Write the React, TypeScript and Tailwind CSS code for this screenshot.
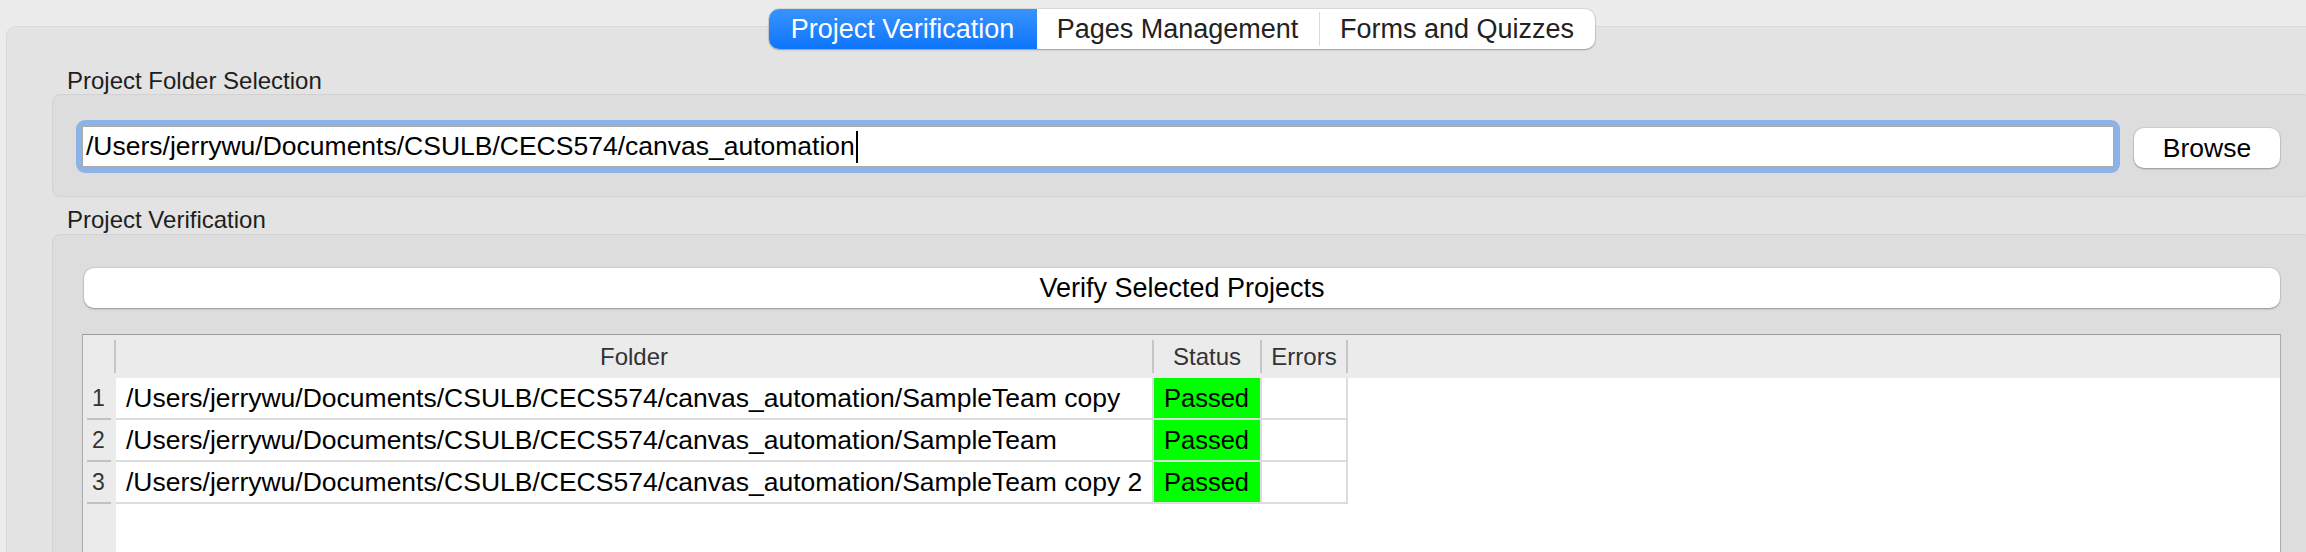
import { useState } from "react"

const rows = [
  "/Users/jerrywu/Documents/CSULB/CECS574/canvas_automation/SampleTeam copy",
  "/Users/jerrywu/Documents/CSULB/CECS574/canvas_automation/SampleTeam",
  "/Users/jerrywu/Documents/CSULB/CECS574/canvas_automation/SampleTeam copy 2",
]

const tabs = [
  { label: "Project Verification", width: "w-[268px]" },
  { label: "Pages Management", width: "w-[282px]" },
  { label: "Forms and Quizzes", width: "w-[275px]" },
]

function HeaderCell({ label, width }: { label: string; width: string }) {
  return (
    <div className={`flex h-full items-center ${width}`}>
      <span className="flex-1 text-center text-[24px] leading-[43px] text-[#333]">{label}</span>
      <div className="h-[33px] w-[2px] bg-[#c6c6c6]" />
    </div>
  )
}

export default function App() {
  const [active, setActive] = useState(0)
  const folder = "/Users/jerrywu/Documents/CSULB/CECS574/canvas_automation"

  return (
    <div className="h-[552px] w-[2306px] overflow-hidden bg-[#ececec] font-['Liberation_Sans',Arial,sans-serif] text-black">
      <div className="w-[2363px] px-[6px] pt-[26px]">
        <div className="h-[600px] rounded-[10px] border border-[#d8d8d8] bg-[#e3e3e3] px-[45px]">
          {/* segmented tabs sit over the panel's top edge */}
          <div className="-mt-[18px] flex justify-center">
            <div className="flex h-[40px] overflow-hidden rounded-[10px] bg-white shadow-[0_0_0_1px_rgba(0,0,0,0.07),0_1px_2px_rgba(0,0,0,0.25)]">
              {tabs.map((t, i) => (
                <div key={t.label} className="flex items-center">
                  {i === 2 && <div className="h-[34px] w-px bg-[#dadada]" />}
                  <button
                    onClick={() => setActive(i)}
                    className={`${t.width} h-[40px] text-center text-[27px] leading-[40px] ${
                      active === i ? "bg-linear-to-b from-[#3793fd] to-[#0a74fb] text-white" : "text-[#222]"
                    }`}
                  >
                    {t.label}
                  </button>
                </div>
              ))}
            </div>
          </div>

          <div className="ml-[15px] mt-[20px] mb-[1px] text-[24px] leading-[24px] text-[#1e1e1e]">Project Folder Selection</div>
          <div className="flex h-[103px] items-start rounded-[8px] border border-[#d2d2d2] bg-[#dddddd] pl-[23px] pr-[30px] pt-[25px]">
            <div className="flex-1 rounded-[9px] bg-[#8cb2e8] p-[6px]">
              <div className="flex h-[41px] items-center border border-[#a9a9a9] bg-white pl-[3px]">
                <span className="whitespace-pre text-[26.5px] leading-[39px]">{folder}</span>
                <span className="ml-[1px] h-[32px] w-[2px] bg-black" />
              </div>
            </div>
            <button className="ml-[14px] mt-[8px] h-[40px] w-[146px] rounded-[10px] bg-white text-[26.5px] leading-[40px] shadow-[0_0_0_1px_rgba(0,0,0,0.05),0_1px_2px_rgba(0,0,0,0.3)]">
              Browse
            </button>
          </div>

          <div className="ml-[15px] mt-[11px] mb-[2px] text-[24px] leading-[24px] text-[#1e1e1e]">Project Verification</div>
          <div className="h-[400px] rounded-[8px] border border-[#d2d2d2] bg-[#dddddd] px-[29px] pt-[33px]">
            <button className="ml-[2px] mr-[1px] block h-[40px] w-[2196px] rounded-[10px] bg-white text-[27px] leading-[40px] shadow-[0_0_0_1px_rgba(0,0,0,0.05),0_1px_2px_rgba(0,0,0,0.3)]">
              Verify Selected Projects
            </button>

            <div className="mt-[26px] flex h-[300px] border-x border-t border-x-[#aaaaaa] border-t-[#9c9c9c] bg-white">
              <div className="flex w-[33px] flex-col bg-[#ebebeb]">
                <div className="flex h-[43px] items-center justify-end">
                  <div className="h-[33px] w-[2px] bg-[#c6c6c6]" />
                </div>
                {rows.map((_, i) => (
                  <div key={i} className="flex w-[31px] flex-col">
                    <div className="h-[40px] text-center text-[23px] leading-[40px] text-[#333]">{i + 1}</div>
                    <div className="ml-[4px] h-[2px] w-[24px] bg-[#c2c2c2]" />
                  </div>
                ))}
              </div>

              <div className="flex flex-1 flex-col">
                <div className="flex h-[43px] bg-[#ebebeb]">
                  <HeaderCell label="Folder" width="w-[1038px]" />
                  <HeaderCell label="Status" width="w-[108px]" />
                  <HeaderCell label="Errors" width="w-[86px]" />
                </div>
                {rows.map((r) => (
                  <div key={r} className="flex">
                    <div className="flex w-[1232px] border-b-2 border-[#dcdcdc]">
                      <div className="h-[40px] w-[1036px] truncate pl-[10px] text-[26.5px] leading-[40px]">{r}</div>
                      <div className="w-[2px] bg-[#dcdcdc]" />
                      <div className="h-[40px] w-[106px] bg-[#00ff00] pl-[10px] text-[25.5px] leading-[40px]">Passed</div>
                      <div className="w-[2px] bg-[#dcdcdc]" />
                      <div className="w-[84px]" />
                      <div className="w-[2px] bg-[#dcdcdc]" />
                    </div>
                  </div>
                ))}
              </div>
            </div>
          </div>
        </div>
      </div>
    </div>
  )
}
